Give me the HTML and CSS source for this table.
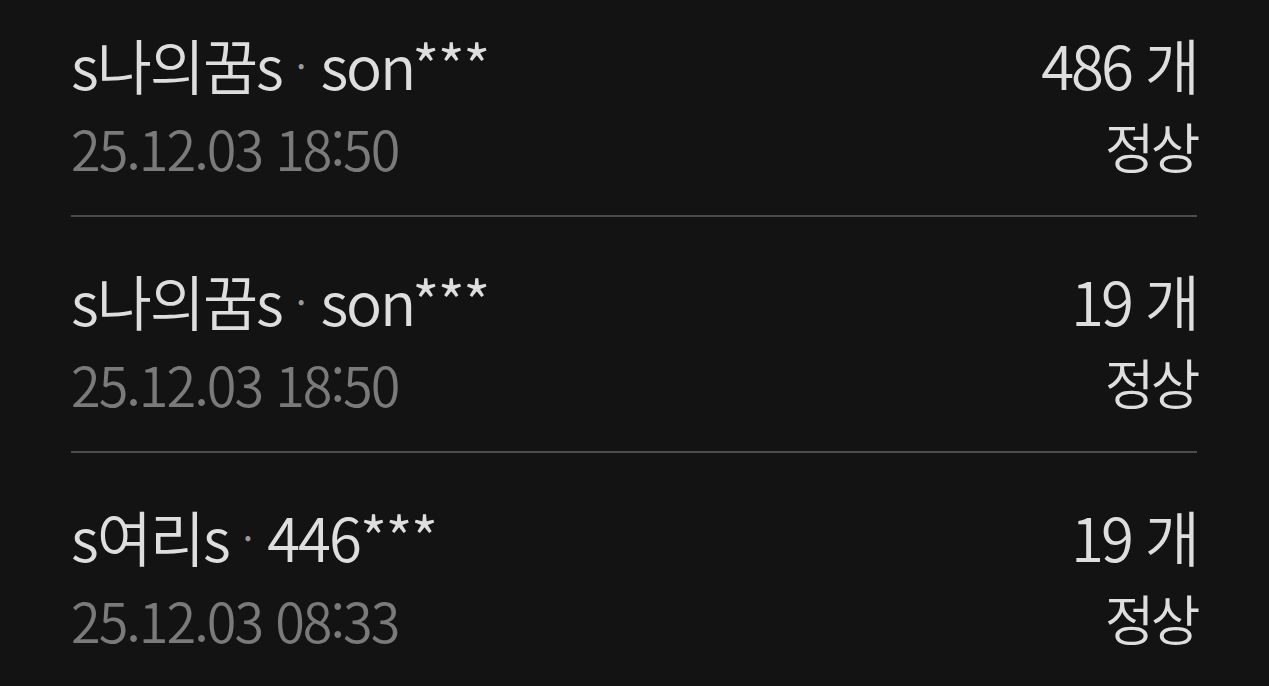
FILE: index.html
```html
<!DOCTYPE html>
<html lang="ko">
<head>
<meta charset="utf-8">
<link rel="stylesheet" href="styles.css">
</head>
<body>
<ul class="list">
  <li class="row">
    <div class="left">
      <div class="title">s나의꿈s<span class="dot">·</span>son***</div>
      <div class="date">25.12.03 18:50</div>
    </div>
    <div class="right">
      <div class="count">486 개</div>
      <div class="status">정상</div>
    </div>
  </li>
  <li class="row">
    <div class="left">
      <div class="title">s나의꿈s<span class="dot">·</span>son***</div>
      <div class="date">25.12.03 18:50</div>
    </div>
    <div class="right">
      <div class="count">19 개</div>
      <div class="status">정상</div>
    </div>
  </li>
  <li class="row">
    <div class="left">
      <div class="title">s여리s<span class="dot">·</span>446***</div>
      <div class="date">25.12.03 08:33</div>
    </div>
    <div class="right">
      <div class="count">19 개</div>
      <div class="status">정상</div>
    </div>
  </li>
</ul>
</body>
</html>
```
FILE: styles.css
```css
html, body {
  margin: 0;
  padding: 0;
  background: #131313;
  height: 100%;
  overflow: hidden;
}
body {
  font-family: "Noto Sans CJK KR", "Noto Sans", sans-serif;
  color: #dedede;
}
.list {
  list-style: none;
  margin: -19px 0 0;
  padding: 0 72px 0 71px;
}
.row {
  display: flex;
  justify-content: space-between;
  align-items: flex-start;
  padding: 40px 0 27px;
  border-bottom: 2px solid #4c4c4c;
}
.title, .count {
  font-size: 60px;
  line-height: 85px;
  letter-spacing: -2.1px;
  font-weight: 350;
}
.count {
  letter-spacing: -3px;
}
.dot {
  display: inline-block;
  color: #9a9a9a;
  font-size: 40px;
  margin: 0 16px 0 14px;
  vertical-align: 8px;
}
.date, .status {
  font-size: 54px;
  line-height: 80px;
  letter-spacing: -2px;
  font-weight: 350;
}
.status {
  letter-spacing: -3.5px;
}
.date {
  color: #7a7a7a;
}
.right {
  text-align: right;
}
```
